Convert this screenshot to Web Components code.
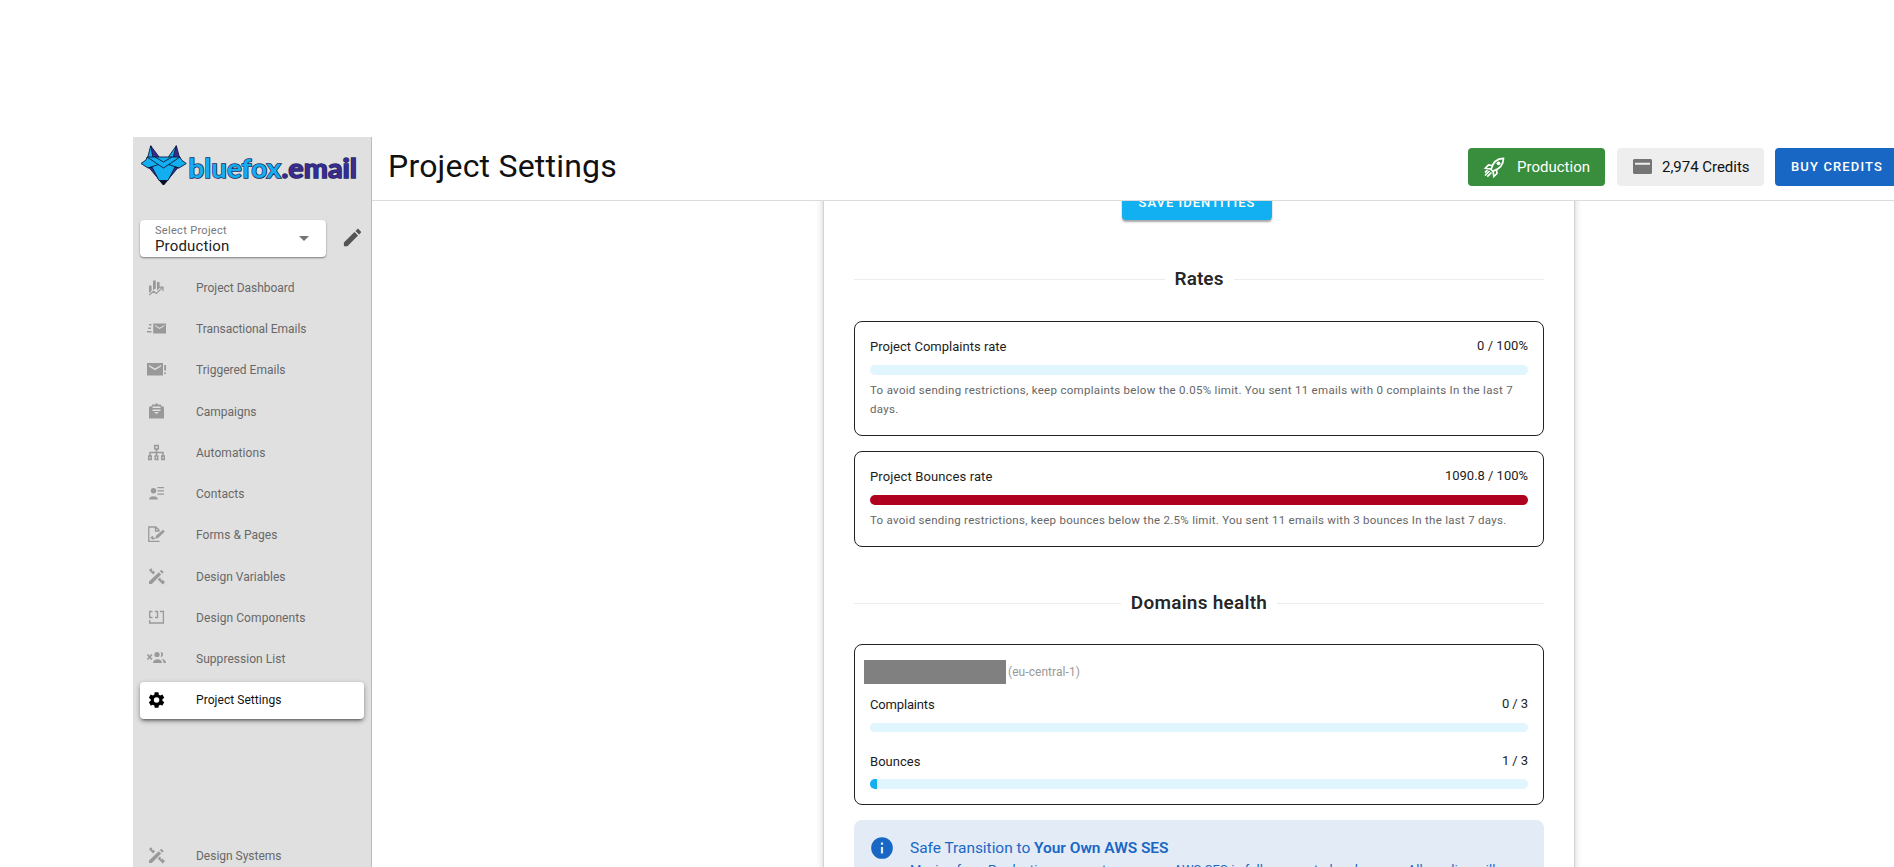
<!DOCTYPE html>
<html lang="en">
<head>
<meta charset="utf-8">
<title>Project Settings</title>
<style>
html,body{margin:0;height:867px;overflow:hidden;background:#fff}
body{font-family:Roboto,"Liberation Sans",sans-serif;color:rgba(0,0,0,.87)}
</style>
</head>
<body>
<app-shell>
  <side-bar slot="side">
    <nav-item icon="dash" w="98.5">Project Dashboard</nav-item>
    <nav-item icon="fast" w="110.5">Transactional Emails</nav-item>
    <nav-item icon="alert" w="89.5">Triggered Emails</nav-item>
    <nav-item icon="camp" w="60.5">Campaigns</nav-item>
    <nav-item icon="auto" w="69.5">Automations</nav-item>
    <nav-item icon="contact" w="48.5">Contacts</nav-item>
    <nav-item icon="form" w="81.5">Forms &amp; Pages</nav-item>
    <nav-item icon="design" w="89.5">Design Variables</nav-item>
    <nav-item icon="comp" w="109.5">Design Components</nav-item>
    <nav-item icon="supp" w="89.5">Suppression List</nav-item>
    <nav-item icon="cog" w="85.5" active>Project Settings</nav-item>
    <nav-item icon="design" w="85.5" class="last">Design Systems</nav-item>
  </side-bar>
  <top-bar slot="top"></top-bar>
  <settings-card>
    <section-title w="49" style="--top:49.5px">Rates</section-title>
    <outlined-box style="--h:115px;--top:31.5px">
      <rate-meter label="Project Complaints rate" lw="136.5" value="0 / 100%" vw="51">
        <fit-text w="643">To avoid sending restrictions, keep complaints below the 0.05% limit. You sent 11 emails with 0 complaints In the last 7</fit-text>
        <fit-text w="28.5">days.</fit-text>
      </rate-meter>
    </outlined-box>
    <outlined-box style="--h:96px;--top:15px">
      <rate-meter label="Project Bounces rate" lw="122.5" value="1090.8 / 100%" vw="83" style="--track:#b00020">
        <fit-text w="636.5">To avoid sending restrictions, keep bounces below the 2.5% limit. You sent 11 emails with 3 bounces In the last 7 days.</fit-text>
      </rate-meter>
    </outlined-box>
    <section-title w="136.5" style="--top:46.5px">Domains health</section-title>
    <outlined-box style="--h:161px;--top:30.5px">
      <domain-name></domain-name>
      <rate-meter class="c" label="Complaints" lw="64.5" value="0 / 3" vw="26" style="--barh:9px"></rate-meter>
      <rate-meter class="b" label="Bounces" lw="50.5" value="1 / 3" vw="26" fill="7" style="--gap:7px"></rate-meter>
    </outlined-box>
    <info-alert></info-alert>
  </settings-card>
</app-shell>
<script>
const define = (name, html, init) => customElements.define(name, class extends HTMLElement {
  connectedCallback() {
    if (this.shadowRoot) return;
    const root = this.attachShadow({mode: 'open'});
    root.innerHTML = typeof html === 'function' ? html(this) : html;
    if (init) init(this, root);
  }
});

const icons = {
  dash: '<path d="M2 7.500h2.600v5.500L2 15zM6 2.600h2.800v8L6 12zM10 4h2.600v6l-2.600 2.500z"/><path d="M2.200 17 6.500 13.200 9.300 15.500 15.500 9.500M11.800 9.200h4.200v4" fill="none" stroke="currentColor" stroke-width="1.200"/>',
  fast: '<path fill-rule="evenodd" d="M6.200 4.400h12.800v10H6.200zM7.800 6v1l4.800 3 4.800-3V6l-4.800 2.800z"/><path d="M2 5h2.500v1.500H2zM1.200 8.500H4V10H1.200zM0 12h4.500v1.500H0z"/>',
  alert: '<path fill-rule="evenodd" d="M0 3h16v12.400H0zM2 5v1.400l6 3.800 6-3.800V5L8 8.600z"/><path d="M17.200 5H19v5.500h-1.800zM17.200 12.500H19V14h-1.800z"/>',
  camp: '<path fill-rule="evenodd" d="M2 5 5 3.800V2.500h3L9.500 1 11 2.500h3v1.300L17 5v11.500H2zM5.500 4.500V6h8V4.500zM5.500 7.500V9h8V7.500zM7 10l2.500 2 2.500-2z"/>',
  auto: '<path fill="none" stroke="currentColor" stroke-width="1.500" d="M7.750 2.500h3.500v3.500h-3.500zM9.500 6v7M3 13V9.500h13V13M1.750 13h2.500v3.500h-2.500zM8.250 13h2.500v3.500h-2.500zM14.750 13h2.500v3.500h-2.500z"/>',
  contact: '<circle cx="6.500" cy="6.800" r="2.700"/><path d="M2 15.500c0-4.500 9-4.500 9 0zM10.500 3h6.500v1.200h-6.500zM10.500 6.300h6.500v1.200h-6.500zM10.500 9.600h6.500v1.200h-6.500z"/>',
  form: '<path d="M12.500 16.300H1.800V2h7L12.500 5.500M8.500 2v4H12.500M4 13.500c1-2.500 2-2.500 1.500-.5s1.500-.5 3 .3" fill="none" stroke="currentColor" stroke-width="1.300"/><path d="m8.500 13.500.5-2.700 7-6 1.800 1.800-6.700 6.300z"/>',
  design: '<path d="M2 14.500 11.800 5.200l2.400 2.400L4.800 17H2zM12.800 4.200l1.500-1.400 2.500 2.400-1.500 1.400zM2 3.200 4 1.200l1.400 1.300-.7.900.9.900.9-.8L8 5.400 6.200 7.600zM10.700 12.600l2.100-2 1.500 1.300-.8.900.9.700 1-.9 2.600 2.700-2.300 2.200z"/>',
  comp: '<path d="M5.500 9.500H2.700V3.500H5.500M8 3.500h2.500v6H8M13 3.500h3.400v11.500H2.700V12" fill="none" stroke="currentColor" stroke-width="1.300"/>',
  supp: '<path d="m.5 5.500 4.500 5M5 5.500.5 10.500" stroke="currentColor" stroke-width="1.600"/><circle cx="10" cy="5.500" r="2.600"/><path d="M6 14c0-5 9-5 9 0zM13.500 3c3.500 0 3.500 5 0 5 1-1.500 1-3.500 0-5zM14.500 9.700c3 .3 4.500 2 4.500 4.300h-2.500c0-2-.5-3-2-4.300z"/>',
  cog: '<path transform="translate(.2 .7) scale(.78)" d="M12 15.500A3.500 3.500 0 0 1 8.500 12 3.500 3.500 0 0 1 12 8.500a3.500 3.500 0 0 1 3.500 3.500 3.500 3.500 0 0 1-3.500 3.500m7.430-2.530c.04-.32.07-.64.07-.97s-.03-.66-.07-1l2.110-1.630c.19-.15.24-.42.12-.64l-2-3.460c-.12-.22-.39-.31-.61-.22l-2.490 1c-.52-.39-1.060-.73-1.690-.98l-.37-2.650A.506.506 0 0 0 14 2h-4c-.25 0-.46.18-.5.42l-.37 2.650c-.63.25-1.170.59-1.690.98l-2.490-1c-.22-.09-.49 0-.61.22l-2 3.460c-.13.22-.07.49.12.64L4.570 11c-.04.34-.07.67-.07 1s.03.650.07.97l-2.110 1.660c-.19.15-.25.42-.12.64l2 3.460c.12.22.39.3.61.22l2.490-1.010c.52.4 1.060.74 1.690.99l.37 2.650c.04.24.25.42.5.42h4c.25 0 .46-.18.5-.42l.37-2.650c.63-.26 1.170-.59 1.690-.99l2.490 1.010c.22.08.49 0 .61-.22l2-3.460c.12-.22.07-.49-.12-.64z"/>'
};

define('nav-item', el => `<style>
:host{display:flex;align-items:center;height:41.24px;font-size:12px;line-height:16px;color:#686868}
.row{display:flex;align-items:center;box-sizing:border-box;width:224px;height:37px;margin-left:7px;padding-left:7px;border-radius:4px}
svg{flex:none;width:20px;height:20px;margin-right:29px;fill:currentColor;color:#999}
:host([active]){color:#111}
:host([active]) .row{background:#fff;box-shadow:0 3px 3px -2px rgba(0,0,0,.4),0 2px 5px rgba(0,0,0,.38)}
:host([active]) svg{color:#000}
:host(.last){margin-top:114.800px}
</style><div class="row"><svg viewBox="0 0 20 20">${icons[el.getAttribute('icon')]}</svg><fit-text w="${el.getAttribute('w')}">${el.innerHTML}</fit-text></div>`);

define('brand-logo', `<style>:host{display:block;width:220px;height:44px}svg{display:block}text{font-family:Lato,sans-serif;font-weight:700;font-size:27.500px;stroke:#1d2a5c;stroke-width:1.500px;paint-order:stroke}</style>
<svg width="220" height="44" viewBox="0 0 220 44">
<g stroke="#0a1a3c" stroke-width=".9" stroke-linejoin="round">
<path fill="#12aef0" d="M9.700.8 6.700 12.500H14z"/>
<path fill="#3b2a92" d="M9.700.8 12 12.500H18.500z"/>
<path fill="#12aef0" d="M35.300.8 27 12.500H34z"/>
<path fill="#3b2a92" d="M35.300.8 38.500 12.500H32z"/>
<path fill="#3b2a92" d="M7.500 22 22.500 40 37.500 22z"/>
<path fill="#12aef0" d="M6 12h33l1.500 3L45.300 18.500 38 23l-4-1-7 13.500h-9L11 22l-4 1L0 18.500 5 15z"/>
<path fill="none" d="M6 12 22.500 23 39 12M7 23 17.500 19.500M38 23 27.500 19.500M14 12l8.500 5L31 12"/>
<path fill="#080a18" d="M18.500 35.500h8L22.500 40z"/></g>
<text x="47.500" y="33" fill="#12aef0" textLength="92.500" lengthAdjust="spacingAndGlyphs">bluefox</text>
<text x="140.500" y="33" fill="#3b2a92" textLength="75.500" lengthAdjust="spacingAndGlyphs">.email</text>
</svg>`);

define('project-select', `<style>
:host{display:flex;align-items:center;height:37px;margin:31px 0 0 7px}
.box{display:flex;align-items:center;justify-content:space-between;box-sizing:border-box;width:186px;height:37px;padding:2px 17px 0 15px;background:#fff;border-radius:4px;box-shadow:0 1px 2px rgba(0,0,0,.45)}
.t{display:flex;flex-direction:column;align-items:flex-start}
.l{font-size:11px;line-height:13px;color:#777}
.v{font-size:15px;line-height:18px;color:#222}
i{width:0;margin-top:-2px;border:5px solid transparent;border-top-color:#757575;border-bottom:0}
svg{width:23px;height:23px;margin:-2px 0 0 15px;fill:#555}
</style><div class="box"><div class="t"><fit-text class="l" w="72">Select Project</fit-text><fit-text class="v" w="74.500">Production</fit-text></div><i></i></div>
<svg viewBox="0 0 24 24"><path d="M20.710 7.040c.39-.39.39-1.040 0-1.410l-2.340-2.340c-.37-.39-1.020-.39-1.410 0l-1.840 1.830 3.750 3.750M3 17.250V21h3.750L17.810 9.930l-3.750-3.750z"/></svg>`);

define('side-bar', `<style>
:host{display:block;box-sizing:border-box;width:239px;height:730px;background:#e0e0e0;border-right:1px solid #bbb;overflow:hidden}
brand-logo{margin:8px 0 0 8px}
nav{margin-top:10.300px}
</style><brand-logo></brand-logo><project-select></project-select><nav><slot></slot></nav>`);

define('top-bar', `<style>
:host{display:flex;align-items:center;box-sizing:border-box;height:64px;padding:0 0 0 16px;border-bottom:1px solid #dcdcdc;background:#fff}
h1{flex:none;width:1080px;margin:0 0 6px;font-weight:400;font-size:32px;line-height:40px;color:#111}
.chip{flex:none;display:flex;align-items:center;box-sizing:border-box;height:38px;margin:-3px 12px 0 0;border-radius:4px;font-size:15px;padding-bottom:1px}
.p{width:137px;background:#388e3c;color:#fff;padding-left:15px}
.c{width:147px;background:#eee;color:#111;padding-left:16px;margin-right:11px}
.b{width:140px;background:#1967c4;color:#fff;padding-left:16px;font-size:13px;font-weight:500;margin-right:0}
svg{flex:none}
</style>
<h1><fit-text w="229">Project Settings</fit-text></h1>
<div class="chip p"><svg width="24" height="24" viewBox="0 0 24 24" style="margin:0 10px 0 0"><g fill="none" stroke="#fff" stroke-width="1.700"><path d="M8 14.500C9.500 8 14 3.500 20.500 3.300 20.500 10 16 14.300 9.800 16.300zM9 10.500 5.500 10 2.500 13.200l4.800.6M13.500 15l.5 3.500-3.200 3-.6-4.900M6.500 16 2 20.500M8.500 17.500 4.300 21.700M2 17.500l2.500-2.300"/></g><circle cx="15.500" cy="8.300" r="1.900" fill="#fff"/></svg><fit-text w="73">Production</fit-text></div>
<div class="chip c"><svg width="19" height="15" viewBox="0 0 19 15" style="margin-right:10px"><path fill="#757575" fill-rule="evenodd" d="M1 0h17l1 1v13l-1 1H1l-1-1V1zM2 3.700v2h15v-2z"/></svg><fit-text w="87.500">2,974 Credits</fit-text></div>
<div class="chip b"><fit-text w="92">BUY CREDITS</fit-text></div>`);

define('section-title', el => `<style>
:host{display:flex;align-items:center;height:20px;margin-top:var(--top);font-weight:600;font-size:19px;line-height:20px}
hr{flex:1;height:1px;border:0;margin:0;background:#ececec}
span{margin:-1px 10px 0}
</style><hr><span><fit-text w="${el.getAttribute('w')}">${el.innerHTML}</fit-text></span><hr>`);

define('outlined-box', `<style>:host{display:flow-root;box-sizing:border-box;height:var(--h);margin-top:var(--top);padding:15px;border:1px solid #222;border-radius:8px}
::slotted(.c){margin-top:-7px!important}::slotted(.b){margin-top:14px!important}</style><slot></slot>`);

define('rate-meter', el => `<style>
:host{display:block;font-size:13px}
.head{display:flex;justify-content:space-between;height:20px;line-height:20px;color:#1c1c1c}
.v{margin-top:-1px}
.bar{height:var(--barh,10px);margin-top:var(--gap,8px);border-radius:5px;background:var(--track,#e1f5fe);overflow:hidden}
.fill{width:${el.getAttribute('fill') || 0}px;height:100%;background:#12b0f0}
.note{display:flex;flex-direction:column;align-items:flex-start;margin-top:6px;font-size:11.500px;line-height:19px;color:#666}
</style><div class="head"><fit-text w="${el.getAttribute('lw')}">${el.getAttribute('label')}</fit-text><fit-text class="v" w="${el.getAttribute('vw')}">${el.getAttribute('value')}</fit-text></div><div class="bar"><div class="fill"></div></div><div class="note"><slot></slot></div>`);

define('domain-name', `<style>
:host{display:flex;align-items:center;height:24px;margin:0 0 18px -6px;font-size:12px;color:#999}
i{width:142px;height:24px;margin-right:2px;background:#808080}
</style><i></i><fit-text w="72">(eu-central-1)</fit-text>`);

define('info-alert', `<style>
:host{display:flex;height:90px;margin-top:15px;padding:0 17px;border-radius:8px;background:#e3ebf7;color:#1967c4}
svg{flex:none;width:26px;height:26px;margin:15px 15px 0 -2px;fill:#1967c4}
div{display:flex;flex-direction:column;align-items:flex-start;padding-top:16px}
.t{font-size:15.500px;line-height:24px}
b{font-weight:600}
.m{font-size:13px;line-height:18px;margin-top:1px}
</style><svg viewBox="0 0 24 24"><path d="M13 9h-2V7h2m0 10h-2v-6h2m-1-9A10 10 0 0 0 2 12a10 10 0 0 0 10 10 10 10 0 0 0 10-10A10 10 0 0 0 12 2z"/></svg>
<div><fit-text class="t" w="258.500">Safe Transition to <b>Your Own AWS SES</b></fit-text>
<fit-text class="m" w="585.500">Moving from Production servers to your own AWS SES is fully supported and secure. All sending will</fit-text></div>`);

define('settings-card', `<style>
:host{display:block;overflow:hidden;height:666px}
.card{box-sizing:border-box;width:750px;height:720px;margin:-20px 0 0 452px;padding:3px 30px 0;background:#fff;box-shadow:0 0 2px rgba(0,0,0,.25),0 1px 8px rgba(0,0,0,.22)}
.save{display:flex;justify-content:center;align-items:center;width:150px;height:36px;margin-left:268px;border-radius:4px;background:#12b0f0;color:#fff;font-size:13px;font-weight:500;box-shadow:0 2px 2px rgba(0,0,0,.35)}
</style><div class="card"><div class="save"><fit-text w="117">SAVE IDENTITIES</fit-text></div><slot></slot></div>`);

define('app-shell', `<style>
:host{display:flex;box-sizing:border-box;width:1894px;height:867px;padding:137px 0 0 133px;overflow:hidden}
main{flex:1;min-width:0;overflow:hidden}
</style><slot name="side"></slot><main><slot name="top"></slot><slot></slot></main>`);

/* A single line whose tracking is tuned to a given width. Registered last, once its surroundings carry their styles. */
define('fit-text', '<style>:host{display:inline-block;white-space:nowrap}</style><slot></slot>', el => {
  const n = el.textContent.trim().length;
  el.style.letterSpacing = '0px';
  const natural = el.getBoundingClientRect().width;
  el.style.letterSpacing = ((+el.getAttribute('w') - natural) / n).toFixed(4) + 'px';
});
</script>
</body>
</html>
